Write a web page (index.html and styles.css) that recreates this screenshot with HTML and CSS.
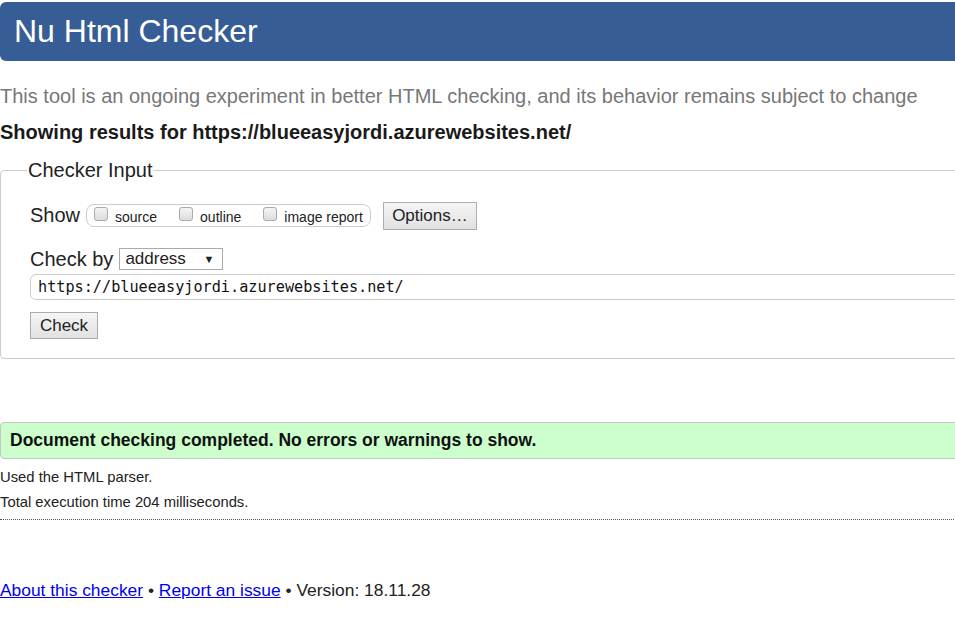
FILE: index.html
```html
<!DOCTYPE html>
<html lang="en">
<head>
<meta charset="utf-8">
<title>Nu Html Checker</title>
<link rel="stylesheet" href="styles.css">
</head>
<body>
<div class="page">
  <h1 class="header">Nu Html Checker</h1>
  <p class="tagline">This tool is an ongoing experiment in better HTML checking, and its behavior remains subject to change</p>
  <p class="showing">Showing results for https://blueeasyjordi.azurewebsites.net/</p>
  <fieldset class="input-box">
    <legend class="legend">Checker Input</legend>
    <div class="row show-row">
      <span class="label">Show</span>
      <span class="check-group">
        <label class="opt"><span class="cb"></span>source</label>
        <label class="opt"><span class="cb"></span>outline</label>
        <label class="opt"><span class="cb"></span>image report</label>
      </span>
      <span class="btn options-btn">Options…</span>
    </div>
    <div class="row by-row">
      <span class="label">Check by</span>
      <span class="select">address<span class="arrow">▼</span></span>
    </div>
    <div class="url-input">https://blueeasyjordi.azurewebsites.net/</div>
    <span class="btn check-btn">Check</span>
  </fieldset>
  <div class="success">Document checking completed. No errors or warnings to show.</div>
  <p class="meta meta-first">Used the HTML parser.</p>
  <p class="meta meta-last">Total execution time 204 milliseconds.</p>
  <div class="footer">
    <a href="#" class="link">About this checker</a> • <a href="#" class="link">Report an issue</a> • Version: 18.11.28
  </div>
</div>
</body>
</html>
```
FILE: styles.css
```css
html, body {
  margin: 0;
  padding: 0;
  overflow: hidden;
  background: #fff;
}
body {
  font-family: "Liberation Sans", Arial, sans-serif;
  color: #222;
}
.page {
  width: 1100px;
  padding-top: 2px;
}
.header {
  margin: 0;
  background: #365d95;
  color: #fff;
  font-weight: normal;
  font-size: 32px;
  line-height: 59px;
  height: 59px;
  padding-left: 14px;
  border-radius: 6px 0 0 6px;
}
.tagline {
  margin: 23px 0 0;
  font-size: 20px;
  line-height: 24px;
  color: #777;
}
.showing {
  margin: 12px 0 0;
  font-size: 20px;
  line-height: 24px;
  font-weight: bold;
  color: #1a1a1a;
}
.input-box {
  margin: 15px 0 0;
  padding: 0 0 19px 29px;
  border: 1px solid #ccc;
  border-radius: 4px;
  height: 179px;
  box-sizing: content-box;
}
.legend {
  font-size: 20px;
  padding: 0 1px;
  margin-left: -3px;
  color: #222;
}
.row {
  display: flex;
  align-items: center;
}
.show-row {
  margin-top: 17px;
}
.label {
  font-size: 20px;
  line-height: 24px;
  margin-right: 6px;
}
.check-group {
  display: flex;
  align-items: flex-start;
  border: 1px solid #ccc;
  border-radius: 8px;
  height: 23px;
  margin-top: 1px;
  padding: 0 7px 0 7px;
  box-sizing: border-box;
}
.opt {
  display: flex;
  align-items: flex-start;
  font-size: 14px;
  line-height: 22px;
  color: #222;
  margin-right: 22px;
  padding-top: 1px;
}
.opt:last-child {
  margin-right: 0;
}
.cb {
  width: 12px;
  height: 12px;
  border: 1px solid #aaa;
  border-radius: 3px;
  background: linear-gradient(#f4f4f4, #dcdcdc);
  margin: 1px 7px 0 0;
}
.btn {
  display: inline-block;
  border: 1px solid #adadad;
  background: linear-gradient(#f5f5f5, #e1e1e1);
  font-size: 17px;
  color: #222;
  box-sizing: border-box;
  text-align: center;
}
.options-btn {
  margin-left: 12px;
  margin-top: 3px;
  width: 94px;
  height: 28px;
  line-height: 26px;
}
.by-row {
  margin-top: 17px;
}
.select {
  display: inline-flex;
  align-items: center;
  justify-content: space-between;
  width: 104px;
  height: 22px;
  border: 1px solid #aaa;
  box-sizing: border-box;
  font-size: 17px;
  padding: 0 8px 0 5px;
  background: #fff;
}
.arrow {
  font-size: 11px;
}
.url-input {
  margin-top: 3px;
  height: 26px;
  border: 1px solid #ccc;
  border-radius: 6px;
  box-sizing: border-box;
  font-family: "DejaVu Sans Mono", monospace;
  font-size: 15.2px;
  line-height: 24px;
  padding-left: 7px;
  color: #111;
}
.check-btn {
  margin-top: 12px;
  width: 68px;
  height: 27px;
  line-height: 25px;
}
.success {
  margin-top: 63px;
  height: 37px;
  box-sizing: border-box;
  background: #ccffcc;
  border: 1px solid #c5c5c5;
  border-radius: 4px;
  padding-left: 9px;
  font-weight: bold;
  font-size: 17.5px;
  line-height: 35px;
  color: #111;
}
.meta {
  margin: 0;
  font-size: 14.8px;
  line-height: 25px;
  color: #222;
}
.meta-first {
  margin-top: 6px;
}
.meta-last {
  border-bottom: 1px dotted #555;
  padding-bottom: 4px;
}
.footer {
  margin-top: 58px;
  font-size: 17.4px;
  line-height: 24px;
  color: #222;
}
.link {
  color: #0000ee;
  text-decoration: underline;
}
```
